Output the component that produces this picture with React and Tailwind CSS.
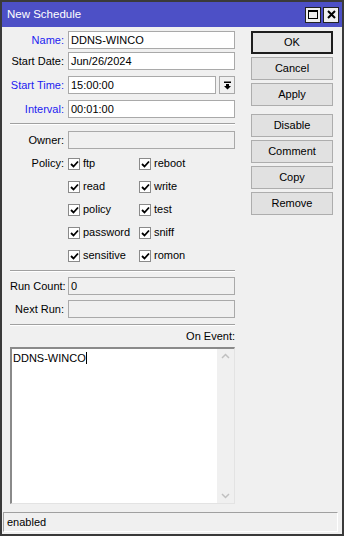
const FONT = { fontFamily: '"Liberation Sans", Arial, sans-serif' }

const POLICIES = [
  ["ftp", "reboot"],
  ["read", "write"],
  ["policy", "test"],
  ["password", "sniff"],
  ["sensitive", "romon"],
]

const BUTTONS_TOP = ["OK", "Cancel", "Apply"]
const BUTTONS_BOTTOM = ["Disable", "Comment", "Copy", "Remove"]

function Label({ children, blue }) {
  return (
    <span className={`w-[54px] mr-[4px] text-right whitespace-nowrap ${blue ? "text-[#1c1cf0]" : "text-black"}`}>
      {children}
    </span>
  )
}

function Field({ label, value, blue, disabled, className = "" }) {
  return (
    <div className={`flex items-center h-[18px] ${className}`}>
      <Label blue={blue}>{label}</Label>
      <div className={`flex-1 h-full border border-[#a9a9a9] px-[2px] flex items-center ${disabled ? "bg-[#f0f0f0]" : "bg-white"}`}>
        {value}
      </div>
    </div>
  )
}

function Separator({ className = "" }) {
  return <div className={`h-[2px] border-t border-[#a0a0a0] border-b border-b-white ${className}`} />
}

function CheckBox({ label }) {
  return (
    <div className="flex items-center w-[71px]">
      <span className="w-[12px] h-[12px] border border-[#8a8a8a] bg-white flex items-center justify-center mr-[3px]">
        <svg width="9" height="8" viewBox="0 0 9 8">
          <path d="M1 4 L3.5 6.5 L8 1.5" fill="none" stroke="#000" strokeWidth="1.8" />
        </svg>
      </span>
      <span>{label}</span>
    </div>
  )
}

function Btn({ children, primary, className = "" }) {
  return (
    <div
      className={`h-[23px] flex items-center justify-center bg-[#e1e1e1] ${
        primary ? "border-2 border-[#1e1e1e] bg-[#e5e5e5]" : "border border-[#adadad]"
      } ${className}`}
    >
      {children}
    </div>
  )
}

export default function App() {
  return (
    <div style={FONT} className="w-[344px] h-[536px] border-2 border-[#3a3a3a] bg-[#f0f0f0] flex flex-col text-[11px] text-black overflow-hidden">
      {/* Title bar */}
      <div className="h-[25px] bg-[#4d50c6] flex items-center pl-[5px] pr-[3px]">
        <span className="text-white text-[11.5px] flex-1">New Schedule</span>
        <div className="w-[16px] h-[16px] bg-[#f0f0f0] border border-[#222] flex items-center justify-center mr-[2px]">
          <div className="w-[10px] h-[9px] border border-black border-t-2" />
        </div>
        <div className="w-[16px] h-[16px] bg-[#f0f0f0] border border-[#222] flex items-center justify-center">
          <svg width="9" height="9" viewBox="0 0 9 9">
            <path d="M1 1 L8 8 M8 1 L1 8" stroke="#000" strokeWidth="2" />
          </svg>
        </div>
      </div>

      {/* Body */}
      <div className="flex flex-1 pl-[8px]">
        {/* Left column */}
        <div className="w-[225px] flex flex-col">
          <Field className="mt-[4px]" label="Name:" value="DDNS-WINCO" blue />
          <Field className="mt-[3px]" label="Start Date:" value="Jun/26/2024" />
          <div className="flex items-center h-[18px] mt-[6px]">
            <Label blue>Start Time:</Label>
            <div className="flex-1 h-full border border-[#a9a9a9] bg-white px-[2px] flex items-center">15:00:00</div>
            <div className="w-[16px] h-full ml-[3px] border border-[#a9a9a9] bg-[#f0f0f0] flex items-center justify-center">
              <svg width="9" height="9" viewBox="0 0 9 9">
                <rect x="1" y="0.5" width="7" height="1.5" fill="#000" />
                <path d="M3 3 H6 V5 H8 L4.5 8.5 L1 5 H3 Z" fill="#000" />
              </svg>
            </div>
          </div>
          <Field className="mt-[6px]" label="Interval:" value="00:01:00" blue />

          <Separator className="mt-[5px]" />

          <Field className="mt-[6px]" label="Owner:" value="" disabled />

          <div className="mt-[3px] flex">
            <Label>
              <span className="h-[23px] flex items-center justify-end">Policy:</span>
            </Label>
            <div className="flex flex-col">
              {POLICIES.map(([a, b]) => (
                <div key={a} className="h-[23px] flex items-center">
                  <CheckBox label={a} />
                  <CheckBox label={b} />
                </div>
              ))}
            </div>
          </div>

          <Separator className="mt-[3px]" />

          <Field className="mt-[5px]" label="Run Count:" value="0" disabled />
          <Field className="mt-[5px]" label="Next Run:" value="" disabled />

          <Separator className="mt-[6px]" />

          <div className="mt-[3px] h-[14px] flex items-center justify-end">On Event:</div>

          <div className="mt-[4px] h-[157px] flex bg-white border-t-2 border-l-2 border-[#8a8a8a] border-r border-b border-r-[#e3e3e3] border-b-[#e3e3e3]">
            <div className="flex-1 pl-[1px] pt-[1px]">
              <span>DDNS-WINCO</span>
              <span className="inline-block w-[1px] h-[12px] bg-black align-middle -mt-[2px]" />
            </div>
            <div className="w-[17px] bg-[#f0f0f0] flex flex-col justify-between items-center py-[4px]">
              <svg width="9" height="6" viewBox="0 0 9 6">
                <path d="M1 5 L4.5 1.5 L8 5" fill="none" stroke="#c0c0c0" strokeWidth="1.5" />
              </svg>
              <svg width="9" height="6" viewBox="0 0 9 6">
                <path d="M1 1 L4.5 4.5 L8 1" fill="none" stroke="#c0c0c0" strokeWidth="1.5" />
              </svg>
            </div>
          </div>
        </div>

        {/* Right column */}
        <div className="ml-[16px] w-[82px] flex flex-col pt-[4px]">
          <div className="flex flex-col gap-[3px]">
            {BUTTONS_TOP.map((b, i) => (
              <Btn key={b} primary={i === 0}>{b}</Btn>
            ))}
          </div>
          <div className="flex flex-col gap-[3px] mt-[8px]">
            {BUTTONS_BOTTOM.map(b => (
              <Btn key={b}>{b}</Btn>
            ))}
          </div>
        </div>
      </div>

      {/* Status bar */}
      <div className="mx-[1px] mb-[2px] mr-[4px] h-[20px] border-t border-l border-[#a0a0a0] border-b border-r border-b-white border-r-white flex items-center px-[3px]">
        enabled
      </div>
    </div>
  )
}
